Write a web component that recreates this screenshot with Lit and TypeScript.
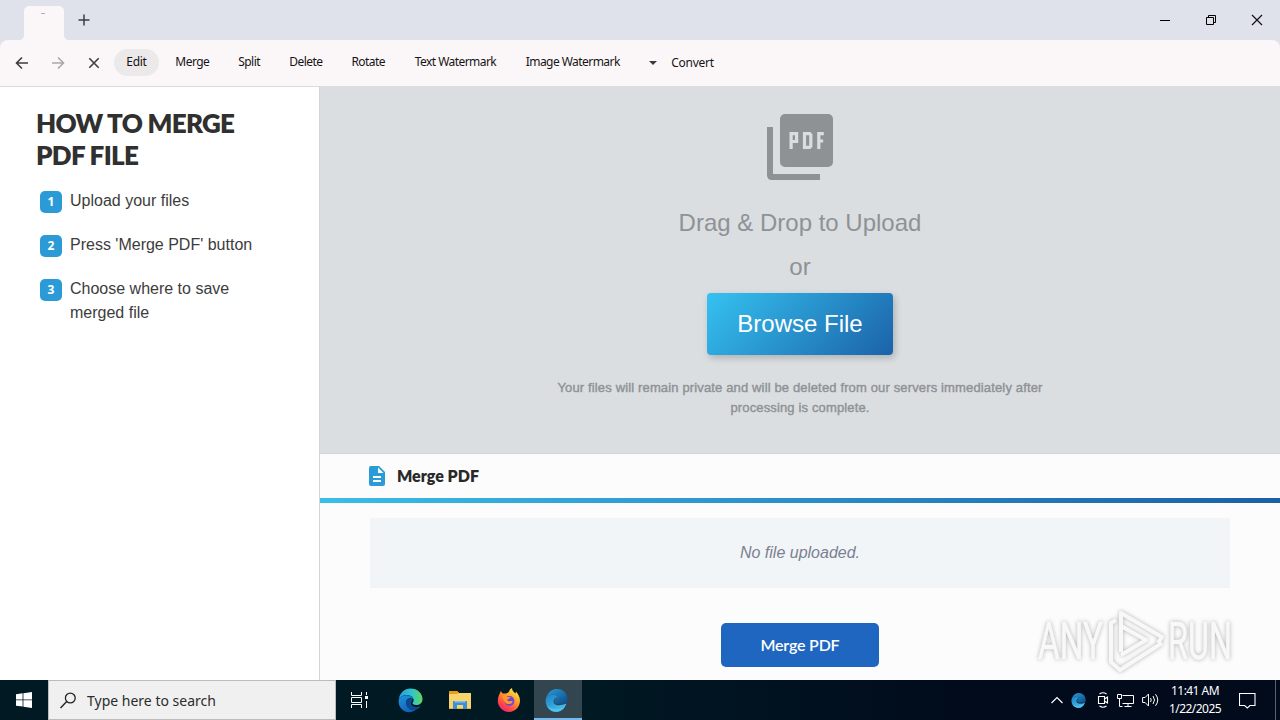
import { html, css, svg, LitElement } from "lit";
import { customElement, property, state } from "lit/decorators.js";
import { classMap } from "lit/directives/class-map.js";

interface MenuItem {
  label: string;
  width: number;
  dropdown?: boolean;
}

const MENU: MenuItem[] = [
  { label: "Edit", width: 45 },
  { label: "Merge", width: 57 },
  { label: "Split", width: 47 },
  { label: "Delete", width: 57 },
  { label: "Rotate", width: 58 },
  { label: "Text Watermark", width: 107 },
  { label: "Image Watermark", width: 118 },
  { label: "Convert", width: 90, dropdown: true },
];

const STEPS = [
  "Upload your files",
  "Press 'Merge PDF' button",
  "Choose where to save merged file",
];

const edgeLogo = (id: string) => svg`
  <defs>
    <linearGradient id="${id}-top" x1="0" y1="0.4" x2="1" y2="0.4">
      <stop offset="0.1" stop-color="#1fa7e0" />
      <stop offset="0.6" stop-color="#35c6c4" />
      <stop offset="1" stop-color="#62d75a" />
    </linearGradient>
    <linearGradient id="${id}-low" x1="0" y1="0" x2="0.6" y2="1">
      <stop offset="0" stop-color="#1f95dd" />
      <stop offset="1" stop-color="#1261b5" />
    </linearGradient>
  </defs>
  <path d="M0.3 11C1 4.5 6 0 12 0c7 0 12 5 12 10.500c0 4-3 6-6.300 6c-3 0-4-1.200-3.600-2c.6-.8 1-1.500 1-2.700C15.100 9 12 6.600 8.500 6.600C4.500 6.600 1.400 8.600.3 11z" fill="url(#${id}-top)" />
  <path d="M0.200 11.500C1 8.500 4.500 6.700 8.500 6.700c3.400 0 6.400 2.300 6.600 4.600c-.8-1-2-1.500-3.100-1.500c-3 0-4.600 2.500-4.300 5c.5 4.300 4.800 7.500 9.300 6.700C10.500 26.500-1 22.500.2 11.500z" fill="url(#${id}-low)" />
  <path d="M12 9.800c-3.800 1.400-4.300 3.600-4.300 5c.2 4 4 7.800 9.300 6.700c2.400-.7 4-2 5.300-4c-5 2.300-9.500.4-9.800-2.600c0-1 .6-1.900 1.300-2.500c.3-1-.4-2-1.800-2.600z" fill="#0b4a93" />
`;

// blue swirl of the PDF browser itself
const swirlLogo = (id: string) => svg`
  <defs>
    <linearGradient id="${id}-a" x1="0" y1="0" x2="1" y2="1">
      <stop offset="0" stop-color="#2a9ddd" />
      <stop offset="1" stop-color="#0c4b86" />
    </linearGradient>
    <linearGradient id="${id}-b" x1="0" y1="0" x2="0.8" y2="1">
      <stop offset="0" stop-color="#1c7fc4" />
      <stop offset="1" stop-color="#49c6f2" />
    </linearGradient>
  </defs>
  <path d="M1.500 8C4 2.500 8 0 12.500 0C19 0 23.500 5 23.500 11c0 2-.6 4-1.500 4.500H10.500C8.800 12 10 9 13.500 7.500C8.500 5.200 4 5.500 1.500 8z" fill="url(#${id}-a)" />
  <path d="M1.500 8C4 5.500 8.500 5.200 13.500 7.500C9 9 8 12.500 9.600 15.300c1.200 1.700 6 2.400 12.700.2C20.500 20.500 17 24 12 24C4 24-1.500 16 1.500 8z" fill="url(#${id}-b)" />
  <path d="M2 17c4 4.500 11 4.500 18 2.500C14 25.500 5 25 2 17z" fill="#4fcaf4" opacity=".7" />
`;

@customElement("browser-chrome")
export class BrowserChrome extends LitElement {
  @state()
  private active = "Edit";

  private select(label: string) {
    this.active = label;
  }

  render() {
    return html`
      <div class="tabs">
        <div class="tab"><span class="tick"></span></div>
        <svg class="plus" width="12" height="12" viewBox="0 0 12 12">
          <path d="M6 .5v11M.5 6h11" stroke="#3c3c44" stroke-width="1.500" />
        </svg>
        <div class="controls">
          <svg width="12" height="12" viewBox="0 0 12 12">
            <path d="M1 6.500h10" stroke="#000" />
          </svg>
          <svg width="12" height="12" viewBox="0 0 12 12">
            <path d="M1.500 3.500h7v7h-7zM3.500 3.500v-2h7v7h-2" fill="none" stroke="#000" />
          </svg>
          <svg width="12" height="12" viewBox="0 0 12 12">
            <path d="M1 1l10 10M11 1L1 11" stroke="#101018" stroke-width="1.200" />
          </svg>
        </div>
      </div>
      <div class="toolbar">
        <svg class="nav" width="14" height="14" viewBox="0 0 14 14">
          <path d="M13 7H1.500M7 1.500L1.500 7L7 12.500" />
        </svg>
        <svg class="nav off" width="14" height="14" viewBox="0 0 14 14">
          <path d="M1 7h11.500M7 1.500L12.500 7L7 12.500" />
        </svg>
        <svg class="nav" width="14" height="14" viewBox="0 0 14 14">
          <path d="M2.300 2.300l9.400 9.400M11.700 2.300L2.300 11.700" />
        </svg>
        <div class="menu">
          ${MENU.map(
            (item) => html`
              <div
                class=${classMap({
                  item: true,
                  active: item.label === this.active,
                  dropdown: !!item.dropdown,
                })}
                style="width: ${item.width}px"
                @click=${() => this.select(item.label)}
              >
                ${item.dropdown ? html`<span class="caret"></span>` : ""}
                <span>${item.label}</span>
              </div>
            `,
          )}
        </div>
      </div>
    `;
  }

  static styles = css`
    :host {
      display: block;
      background: #dfe2eb;
      font-family: "Noto Sans", "Open Sans", sans-serif;
    }

    .tabs {
      display: flex;
      align-items: center;
      height: 40px;
      box-sizing: border-box;
      padding-left: 24px;
    }

    .tab {
      position: relative;
      display: flex;
      justify-content: center;
      align-self: flex-end;
      width: 40px;
      height: 34px;
      box-sizing: border-box;
      padding-top: 7px;
      background: #fbf7f8;
      border-radius: 5px 5px 0 0;
    }

    .tab::before,
    .tab::after {
      content: "";
      position: absolute;
      bottom: 0;
      width: 5px;
      height: 5px;
    }

    .tab::before {
      left: -5px;
      background: radial-gradient(circle at 0 0, transparent 5px, #fbf7f8 5px);
    }

    .tab::after {
      right: -5px;
      background: radial-gradient(circle at 100% 0, transparent 5px, #fbf7f8 5px);
    }

    .tick {
      width: 4px;
      height: 1px;
      margin-right: 3px;
      background: #b5b2b5;
    }

    .plus {
      margin-left: 14px;
    }

    .controls {
      display: flex;
      gap: 34px;
      margin-left: auto;
      padding-right: 17px;
    }

    .toolbar {
      display: flex;
      align-items: center;
      height: 47px;
      box-sizing: border-box;
      padding-left: 15px;
      background: #fbf7f8;
      border-bottom: 1px solid #dcdadd;
      border-radius: 8px 8px 0 0;
    }

    .nav {
      margin-right: 22px;
      fill: none;
      stroke: #3f3d40;
      stroke-width: 1.6;
    }

    .nav.off {
      stroke: #aaa7a9;
    }

    .nav:nth-child(3) {
      margin-right: 13px;
    }

    .menu {
      display: flex;
      gap: 4.8px;
      padding-bottom: 1px;
    }

    .item {
      display: flex;
      align-items: center;
      justify-content: center;
      height: 27px;
      box-sizing: border-box;
      padding-bottom: 2px;
      border-radius: 14px;
      font-size: 12px;
      letter-spacing: -0.55px;
      color: #161416;
      white-space: nowrap;
    }

    .item.active {
      background: #ece9ea;
      letter-spacing: -0.3px;
    }

    .item.dropdown {
      gap: 14px;
      padding-bottom: 0;
      letter-spacing: -0.25px;
    }

    .caret {
      border: 4.500px solid transparent;
      border-top-color: #3b393b;
      border-bottom: 0;
    }
  `;
}

@customElement("how-to-panel")
export class HowToPanel extends LitElement {
  render() {
    return html`
      <h1 class="title">HOW TO MERGE<br />PDF FILE</h1>
      <div class="steps">
        ${STEPS.map(
          (step, i) => html`
            <div class="step">
              <span class="number">${i + 1}</span>
              <span class="text">${step}</span>
            </div>
          `,
        )}
      </div>
    `;
  }

  static styles = css`
    :host {
      display: block;
      width: 320px;
      box-sizing: border-box;
      padding: 20px 60px 0 36px;
      background: #fff;
      border-right: 1px solid #d3d5d8;
      font-family: "Liberation Sans", Arial, sans-serif;
    }

    .title {
      margin: 0;
      font: 800 26px/32px Lato, sans-serif;
      letter-spacing: -0.7px;
      white-space: nowrap;
      color: #303030;
    }

    .steps {
      display: flex;
      flex-direction: column;
      gap: 20px;
      margin-top: 18px;
      padding-left: 4px;
    }

    .step {
      display: flex;
      gap: 8px;
    }

    .number {
      flex: none;
      width: 22px;
      height: 22px;
      margin-top: 2px;
      border-radius: 5px;
      background: #2a9bd6;
      color: #fff;
      font: 700 12px/21px "Open Sans", sans-serif;
      text-align: center;
    }

    .text {
      font-size: 16px;
      line-height: 24px;
      color: #3c3c3c;
    }
  `;
}

@customElement("merge-workspace")
export class MergeWorkspace extends LitElement {
  @property({ attribute: false })
  files: string[] = [];

  render() {
    return html`
      <div class="drop">
        <svg class="pdf" width="66" height="66" viewBox="0 0 66 66">
          <path d="M0 13h6v47h47v6H5q-5 0-5-5z" fill="#8e9295" />
          <rect x="13" width="53" height="53" rx="5" fill="#8e9295" />
          <g fill="none" stroke="#dadee1" stroke-width="3.200">
            <path d="M24.100 35V19.600h5.500v7.900h-5.500" />
            <path d="M37.500 19.600h5.200l1.100 1.200v11.400l-1.100 1.200h-5.200z" />
            <path d="M51.800 35V19.600h5M51.800 27h4.400" />
          </g>
        </svg>
        <div class="lead">Drag &amp; Drop to Upload</div>
        <div class="or">or</div>
        <button class="browse">Browse File</button>
        <div class="privacy">
          Your files will remain private and will be deleted from our servers
          immediately after processing is complete.
        </div>
      </div>
      <div class="heading">
        <svg width="16" height="20" viewBox="0 0 16 20">
          <path d="M2 0h8l6 6v12q0 2-2 2H2q-2 0-2-2V2q0-2 2-2z" fill="#2a9bd6" />
          <path d="M9 1.500V7h5.500zM4 10h8v2H4zM4 14h8v2H4z" fill="#fcfcfc" />
        </svg>
        <span class="caption">Merge PDF</span>
      </div>
      <div class="rule"></div>
      <div class="list">
        ${this.files.length
          ? this.files.map((file) => html`<span>${file}</span>`)
          : html`<span>No file uploaded.</span>`}
      </div>
      <button class="merge">Merge PDF</button>
    `;
  }

  static styles = css`
    :host {
      display: flex;
      flex-direction: column;
      flex: 1;
      background: #fcfcfc;
      font-family: "Liberation Sans", Arial, sans-serif;
    }

    button {
      border: 0;
      padding: 0;
      font-family: inherit;
      color: #fff;
    }

    .drop {
      display: flex;
      flex-direction: column;
      align-items: center;
      height: 367px;
      box-sizing: border-box;
      padding-top: 27px;
      background: #dadee1;
      border-bottom: 1px solid #d4d4d4;
      color: #8e9295;
    }

    .lead,
    .or {
      font-size: 24px;
      line-height: 32px;
    }

    .lead {
      margin-top: 27px;
    }

    .or {
      margin-top: 12px;
    }

    .browse {
      width: 186px;
      height: 62px;
      margin-top: 10px;
      border-radius: 4px;
      background: linear-gradient(135deg, #35c2f0, #1b62a9);
      box-shadow: 2px 3px 7px rgba(0, 0, 0, 0.2);
      font-size: 24px;
    }

    .privacy {
      width: 500px;
      margin-top: 23px;
      font-size: 13px;
      line-height: 20px;
      letter-spacing: 0.145px;
      text-align: center;
      -webkit-text-stroke: 0.4px #8e9295;
    }

    .heading {
      display: flex;
      align-items: center;
      gap: 12px;
      height: 44px;
      padding-left: 49px;
      font: 800 16px Lato, sans-serif;
      color: #292929;
    }

    .caption {
      padding-bottom: 2px;
    }

    .rule {
      height: 5px;
      background: linear-gradient(90deg, #3abde8, #1b5fa8);
    }

    .list {
      display: flex;
      align-items: center;
      justify-content: center;
      height: 70px;
      margin: 15px 50px 0;
      background: #f2f5f8;
      font-size: 16px;
      font-style: italic;
      color: #7b8090;
    }

    .merge {
      align-self: center;
      width: 158px;
      height: 44px;
      margin-top: 35px;
      padding-bottom: 2px;
      border-radius: 5px;
      background: #1f66c1;
      font: 600 16px Lato, sans-serif;
      letter-spacing: -0.2px;
    }
  `;
}

@customElement("run-watermark")
export class RunWatermark extends LitElement {
  render() {
    return html`
      <svg width="216" height="74" viewBox="0 0 216 74">
        <g class="letters">
          <text x="4" y="53" textLength="65" lengthAdjust="spacingAndGlyphs">ANY</text>
          <text x="134" y="53" textLength="64" lengthAdjust="spacingAndGlyphs">RUN</text>
        </g>
        <g class="mark">
          <path d="M87 46V7L128 31L124 37" />
          <path d="M82 14L77 17V56L86 64L128 37" />
          <path d="M87 49L112 34L87 20" />
        </g>
      </svg>
    `;
  }

  static styles = css`
    :host {
      position: absolute;
      left: 1034px;
      top: 606px;
      width: 216px;
      height: 74px;
      pointer-events: none;
    }

    svg {
      display: block;
      overflow: visible;
      filter: drop-shadow(0 0 2px rgba(0, 0, 0, 0.3));
    }

    .letters {
      font: 400 52px Roboto, sans-serif;
      fill: #f8f8f8;
      stroke: #f8f8f8;
      stroke-width: 0.6;
    }

    .mark {
      fill: none;
      stroke: #f8f8f8;
      stroke-width: 4;
      stroke-linejoin: round;
    }
  `;
}

@customElement("task-bar")
export class TaskBar extends LitElement {
  render() {
    return html`
      <div class="start">
        <svg width="16" height="16" viewBox="0 0 16 16">
          <path d="M0 2.200L6.600 1.300V7.500H0zM7.400 1.200L16 0v7.500H7.400zM0 8.300h6.600v6.300L0 13.700zM7.400 8.300H16V16l-8.600-1.200z" fill="#fff" />
        </svg>
      </div>
      <div class="search">
        <svg width="16" height="17" viewBox="0 0 16 17">
          <circle cx="10.300" cy="6" r="4.900" fill="none" stroke="#222" stroke-width="1.300" />
          <path d="M6.700 9.600L.5 16" stroke="#222" stroke-width="1.400" />
        </svg>
        <span>Type here to search</span>
      </div>
      <div class="app view">
        <svg width="18" height="16" viewBox="0 0 18 16">
          <path d="M.5 0v3.500h10V0M.5 16v-3.500h10V16M.5 5.500h10v5H.5zM15.500 0v3M15.500 9v7" fill="none" stroke="#fff" />
          <rect x="14" y="4" width="3" height="3" fill="#fff" />
        </svg>
      </div>
      <div class="app">
        <svg width="25" height="25" viewBox="-.5 -.5 25 25">${edgeLogo("edge")}</svg>
      </div>
      <div class="app">
        <svg width="22" height="18" viewBox="0 0 22 18">
          <path d="M0 0h8l2 2h12v16H0z" fill="#f9d36c" />
          <path d="M0 0h8l2 2-2 1H0z" fill="#e99b19" />
          <path d="M0 17h22v1H0z" fill="#eab33a" />
          <path d="M4 10h14v8h-4v-4H8v4H4z" fill="#3a91d8" />
          <path d="M5.500 10h11v1.500h-11z" fill="#82bfeb" />
        </svg>
      </div>
      <div class="app">
        <svg width="24" height="24" viewBox="0 0 24 24">
          <defs>
            <linearGradient id="fox" x1="0.900" y1="0" x2="0.250" y2="1">
              <stop offset="0.050" stop-color="#fff04a" />
              <stop offset="0.400" stop-color="#ffa52b" />
              <stop offset="0.750" stop-color="#ff4b45" />
              <stop offset="1" stop-color="#ed2079" />
            </linearGradient>
          </defs>
          <path d="M3 5l.8-2 1.800 2.600L9 5.500C11 5 12 4 12.500 2.500C13 1 14 .5 15 0c0 3 2 4 3.500 5.500l.5-2c2.500 3 4 6 4 9C23 19 18 24 12 24S.8 19 .8 13C.8 9.500 2 7 3 5z" fill="url(#fox)" />
          <circle cx="12.400" cy="13" r="5" fill="#7344d8" />
          <path d="M5 8c2-1 4-.5 5.500 1l3 .3c-.4 1.200-2 1.400-3 2c-.5 1.500 1.500 2.500 3 1.800c1-.5 2.300 0 2.300.6c-1.300 2.800-6 3.500-8.200.3C6.500 12 6.800 10 5 8z" fill="#ff9826" />
        </svg>
      </div>
      <div class="app current">
        <svg width="23" height="23" viewBox="0 0 24 24">${swirlLogo("swirl")}</svg>
      </div>
      <div class="tray">
        <svg width="12" height="8" viewBox="0 0 12 8">
          <path d="M.5 7L6 1.500L11.500 7" fill="none" stroke="#fff" stroke-width="1.200" />
        </svg>
        <svg width="15" height="15" viewBox="0 0 24 24">${swirlLogo("tray")}</svg>
        <svg class="camera" width="12" height="16" viewBox="0 0 12 16">
          <path d="M1.500 4.500h6v7h-6zM7.500 7l3-2v6l-3-2M2.500 2Q6-.5 9.500 2M2.500 14Q6 16.500 9.500 14" fill="none" stroke="#fff" stroke-width="1.100" />
        </svg>
        <svg width="17" height="15" viewBox="0 0 17 15">
          <path d="M5.500 2.500h11v8h-11M11 10.500v3M7.500 13.500h7M.5 1.500h4v4h-4zM2.500 5.500v8h3" fill="none" stroke="#fff" />
        </svg>
        <svg width="17" height="14" viewBox="0 0 17 14">
          <path d="M.6 4.500h2.500L6.500 1v12L3.100 9.500H.6zM8.500 5q1.500 2 0 4M11 3q3 4 0 8M13.500 1.200q4.500 5.800 0 11.600" fill="none" stroke="#fff" />
        </svg>
      </div>
      <div class="clock">
        <span class="time">11:41 AM</span>
        <span>1/22/2025</span>
      </div>
      <svg class="note" width="17" height="17" viewBox="0 0 17 17">
        <path d="M.5 1.500h15.500v12H11l-2.700 2.500L5.600 13.500H.5z" fill="none" stroke="#fff" stroke-width="1.100" />
      </svg>
      <div class="peek"></div>
    `;
  }

  static styles = css`
    :host {
      display: flex;
      align-items: center;
      height: 40px;
      background: linear-gradient(90deg, #001923, #001923 45%, #010b1c 75%);
      color: #fff;
      font-family: "Noto Sans", "Open Sans", sans-serif;
    }

    .start,
    .app {
      display: flex;
      align-items: center;
      justify-content: center;
      width: 48px;
      height: 40px;
    }

    .app {
      width: 49px;
    }

    .app.view {
      width: 48px;
      margin-right: 2px;
    }

    .app.current {
      width: 48px;
      box-sizing: border-box;
      margin-left: 1px;
      padding-right: 3px;
      background: #33464f;
      box-shadow: inset 0 -2px #76b9ed;
    }

    .search {
      display: flex;
      align-items: center;
      gap: 11px;
      width: 288px;
      height: 40px;
      box-sizing: border-box;
      padding-left: 11px;
      background: #f0f0f0;
      border: 1px solid #bcbcbc;
      color: #2c2c2c;
      font-size: 14px;
      white-space: nowrap;
    }

    .tray {
      display: flex;
      align-items: center;
      gap: 8px;
      margin-left: auto;
    }

    .camera {
      margin-left: 3px;
    }

    .clock {
      display: flex;
      flex-direction: column;
      align-items: center;
      width: 56px;
      margin-left: 8px;
      font-size: 12px;
      line-height: 18px;
      letter-spacing: -0.55px;
      white-space: nowrap;
    }

    .note {
      margin-left: 16px;
    }

    .peek {
      width: 4px;
      height: 40px;
      margin-left: 19px;
      border-left: 1px solid #566270;
    }
  `;
}

@customElement("app-root")
export class AppRoot extends LitElement {
  render() {
    return html`
      <browser-chrome></browser-chrome>
      <div class="page">
        <how-to-panel></how-to-panel>
        <merge-workspace></merge-workspace>
      </div>
      <task-bar></task-bar>
      <run-watermark></run-watermark>
    `;
  }

  static styles = css`
    :host {
      position: relative;
      display: flex;
      flex-direction: column;
      width: 1280px;
      height: 720px;
      overflow: hidden;
    }

    .page {
      display: flex;
      flex: 1;
      min-height: 0;
    }
  `;
}

declare global {
  interface HTMLElementTagNameMap {
    "app-root": AppRoot;
    "browser-chrome": BrowserChrome;
    "how-to-panel": HowToPanel;
    "merge-workspace": MergeWorkspace;
    "run-watermark": RunWatermark;
    "task-bar": TaskBar;
  }
}
